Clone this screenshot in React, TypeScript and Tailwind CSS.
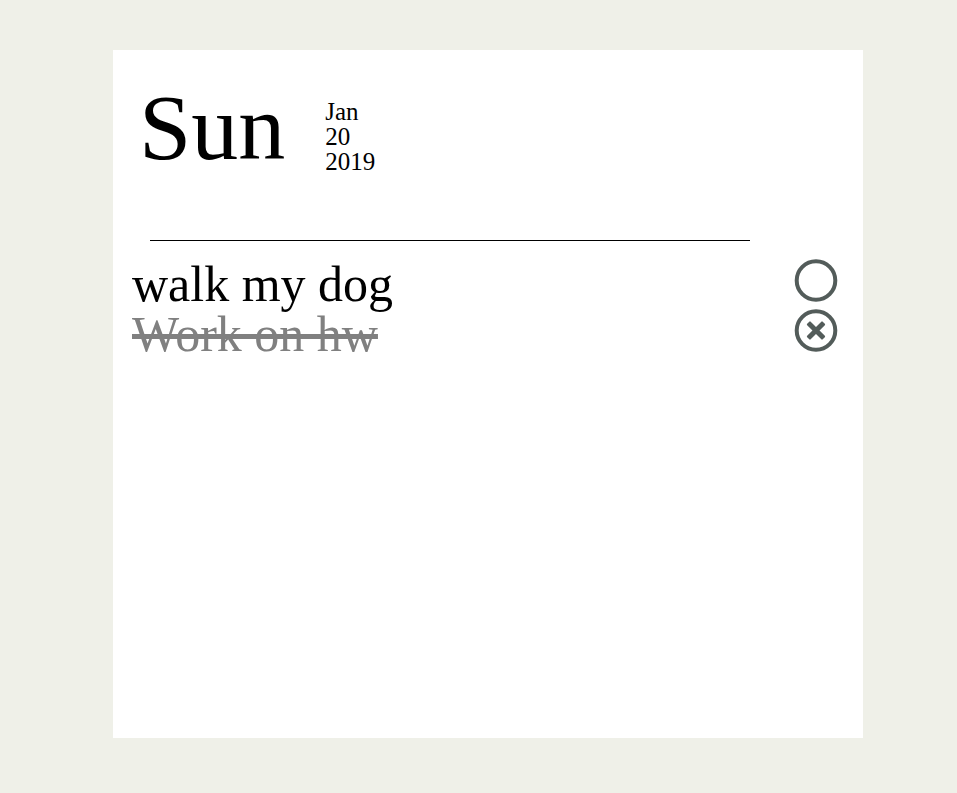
import { useState } from 'react';

type Task = { id: number; text: string; done: boolean };

const initialTasks: Task[] = [
  { id: 1, text: 'walk my dog', done: false },
  { id: 2, text: 'Work on hw', done: true },
];

function StatusIcon({ done }: { done: boolean }) {
  return (
    <svg viewBox="0 0 50 50" className="size-full" aria-hidden="true">
      <circle cx="25" cy="25.5" r="19.3" fill="none" stroke="#535c5a" strokeWidth="4" />
      {done && (
        <g fill="#535c5a" transform="rotate(45 25 25.5)">
          <rect x="14" y="23" width="22" height="5" rx="1" />
          <rect x="22.5" y="14.5" width="5" height="22" rx="1" />
        </g>
      )}
    </svg>
  );
}

export default function App() {
  const [tasks, setTasks] = useState(initialTasks);
  const toggle = (id: number) =>
    setTasks(tasks.map((t) => (t.id === id ? { ...t, done: !t.done } : t)));

  return (
    <div className="min-h-screen bg-[#eff0e8] pt-[50px] pr-[94px] pb-[55px] pl-[113px] font-['Liberation_Serif',serif] text-black">
      <main className="min-h-[688px] bg-white">
        <header className="flex gap-10 pt-[35px] pl-[26px]">
          <h1 className="text-[94px] leading-[84px]">Sun</h1>
          <time dateTime="2019-01-20" className="flex flex-col pt-[14px] text-[25px] leading-[25px]">
            <span>Jan</span>
            <span>20</span>
            <span>2019</span>
          </time>
        </header>
        <hr className="mt-[66px] mr-[113px] ml-[37px] border-black" />
        <ul className="pt-[14px] pr-[22px] pl-[19px]">
          {tasks.map((t) => (
            <li key={t.id} className="flex h-[50px] items-start justify-between">
              <span
                className={
                  t.done
                    ? 'pt-1 text-[50px] leading-[50px] text-[#808080] line-through'
                    : 'pt-1 text-[50px] leading-[50px]'
                }
              >
                {t.text}
              </span>
              <button type="button" aria-label={t.text} aria-pressed={t.done} onClick={() => toggle(t.id)} className="size-[50px]">
                <StatusIcon done={t.done} />
              </button>
            </li>
          ))}
        </ul>
      </main>
    </div>
  );
}
